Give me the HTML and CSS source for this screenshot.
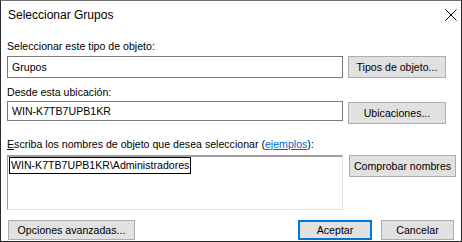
FILE: index.html
```html
<!DOCTYPE html>
<html lang="es">
<head>
  <meta charset="UTF-8">
  <title>Seleccionar Grupos</title>
  <link rel="stylesheet" href="styles.css">
</head>
<body>
  <div class="dialog">
    <div class="titlebar">
      <span class="title">Seleccionar Grupos</span>
      <svg class="close" width="12" height="12" viewBox="0 0 12 12">
        <path d="M0.5 0.5 L11.5 11.5 M11.5 0.5 L0.5 11.5" stroke="#000" stroke-width="1" fill="none"/>
      </svg>
    </div>

    <div class="content">
      <div class="label l1">Seleccionar este tipo de objeto:</div>
      <div class="row r1">
        <div class="field">Grupos</div>
        <button class="btn b-tipos">Tipos de objeto...</button>
      </div>

      <div class="label l2">Desde esta ubicación:</div>
      <div class="row r2">
        <div class="field f2">WIN-K7TB7UPB1KR</div>
        <button class="btn b-ubic">Ubicaciones...</button>
      </div>

      <div class="label l3"><u>E</u>scriba los nombres de objeto que desea seleccionar (<a class="link">ejemplos</a>):</div>
      <div class="row r3">
        <div class="area"><span class="sel">WIN-K7TB7UPB1KR\Administradores</span></div>
        <button class="btn b-comp">Comprobar nombres</button>
      </div>

      <div class="footer">
        <button class="btn b-opc">Opciones avanzadas...</button>
        <div class="spacer"></div>
        <button class="btn b-ok">Aceptar</button>
        <button class="btn b-cancel">Cancelar</button>
      </div>
    </div>
  </div>
</body>
</html>
```

FILE: styles.css
```css
* {
  margin: 0;
  padding: 0;
  box-sizing: border-box;
}

body {
  font-family: 'Liberation Sans', Arial, sans-serif;
  font-size: 10.6px;
  color: #000;
  background: #fff;
}

.dialog {
  width: 462px;
  height: 242px;
  border: 1px solid #2b2b2b;
  border-top-color: #6e6e6e;
  background: #fff;
}

.titlebar {
  height: 29px;
  display: flex;
  align-items: center;
  justify-content: space-between;
  padding: 0 4px 1px 7px;
}

.title {
  font-size: 12px;
}

.close {
  margin-top: -1px;
}

.content {
  padding: 0 0 0 6px;
}

.label {
  height: 13px;
  line-height: 13px;
  white-space: nowrap;
}

.l1 { margin-top: 10px; }
.l2 { margin-top: 8px; }
.l3 { margin-top: 14px; }

.link {
  color: #0066cc;
  text-decoration: underline;
}

.row {
  display: flex;
  align-items: flex-start;
  gap: 5px;
}

.r1 { margin-top: 3px; }
.r2 { margin-top: 2px; }
.r3 { margin-top: 4px; }

.field {
  width: 336px;
  height: 22px;
  border: 1px solid #7a7a7a;
  padding: 0 4px;
  line-height: 20px;
}

.f2 {
  height: 20px;
  line-height: 18px;
}

.area {
  width: 336px;
  height: 55px;
  border: 1px solid #e3e3e3;
  border-top: 2px solid #a0a0a0;
  border-left-color: #a0a0a0;
  padding: 0 0 0 1px;
}

.sel {
  display: inline-block;
  border: 1px solid #000;
  padding: 0 1px;
  height: 17px;
  line-height: 15px;
}

.btn {
  font-family: inherit;
  font-size: 10.6px;
  color: #000;
  background: #e1e1e1;
  border: 1px solid #adadad;
  height: 22px;
}

.b-tipos { width: 98px; }
.b-ubic { width: 98px; margin-top: 1px; }
.b-comp { width: 107px; margin-left: 1px; }

.footer {
  display: flex;
  margin-top: 10px;
  padding-right: 7px;
  gap: 9px;
}

.spacer { flex: 1; }

.b-opc {
  width: 127px;
  height: 20px;
  margin-left: 1px;
}

.b-ok {
  width: 74px;
  height: 20px;
  border: 2px solid #0078d7;
}

.b-cancel {
  width: 73px;
  height: 20px;
}
```
